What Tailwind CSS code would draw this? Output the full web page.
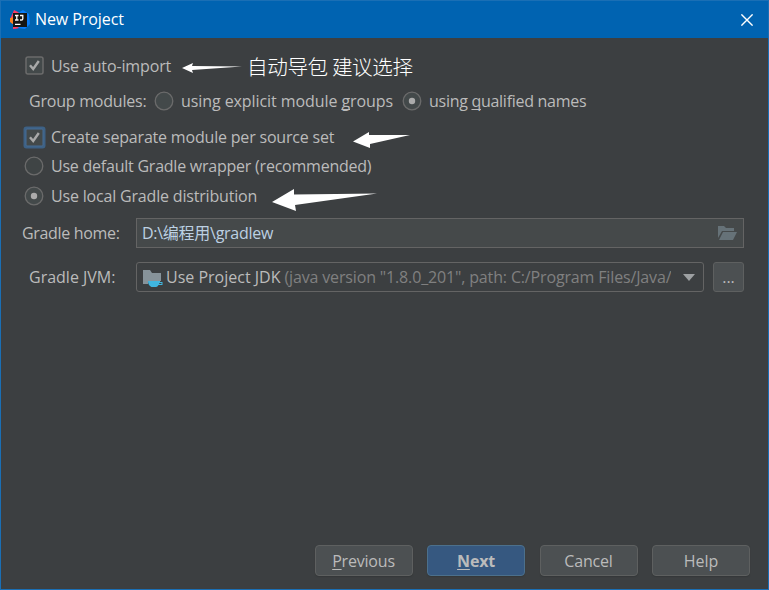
<!DOCTYPE html>
<html lang="en">
<head>
<meta charset="utf-8">
<title>New Project</title>
<script src="https://cdn.jsdelivr.net/npm/@tailwindcss/browser@4"></script>
</head>
<body class="w-[769px] h-[590px] overflow-hidden bg-[#3c3f41]">
<div class="relative flex flex-col w-[769px] h-[590px] border border-[#1a6fb5] bg-[#3c3f41] font-['Open_Sans','Noto_Sans_CJK_SC',sans-serif] text-[16px] leading-[24px] text-[#bbbbbb] whitespace-nowrap [text-decoration-skip-ink:none]">
  <header class="flex items-center h-[37px] shrink-0 bg-[#0063b1] pl-[9px] pr-[15px] text-white">
    <svg class="w-5 h-5 shrink-0" viewBox="0 0 20 20">
      <path d="M4 0 10 3 9 18 3 19 3 14 0 11 1 7Z" fill="#fb3965"/>
      <path d="M0 8 4 7V15L0 12Z" fill="#fc801d"/>
      <path d="M13 0 19 4 20 14 15 19 8 18V3Z" fill="#087cfa"/>
      <path d="M4 14 9 18 3 19Z" fill="#fb3965"/>
      <rect x="3" y="3" width="14" height="14" fill="#151515"/>
      <path d="M5 5.500H8.500M6.800 5.500V10M5 10H8.500M10 5.500H12.800V8.800Q12.800 10 11.500 10H10M5 14.300H10.500" fill="none" stroke="#fff" stroke-width="1.3"/>
    </svg>
    <span class="ml-[5px] -mt-px tracking-[-0.08px]">New Project</span>
    <svg class="ml-auto w-3 h-3" viewBox="0 0 12 12"><path d="M.4.4 11.6 11.6M11.6.4.4 11.6" stroke="#fff" stroke-width="1.4"/></svg>
  </header>

  <main class="flex flex-col flex-1 pt-4">
    <div class="flex items-center h-6 pl-6">
      <svg class="-mt-[2px] w-[19px] h-[19px]" viewBox="0 0 19 19"><rect x="1" y="1" width="17" height="17" rx="2" fill="#43494a" stroke="#6b6b6b" stroke-width="1.5"/><path d="M5 9.200 8.200 13 13.800 5" fill="none" stroke="#a9a9a9" stroke-width="2.4"/></svg>
      <span class="ml-[7px] w-[120px] tracking-[-0.13px]">Use auto-import</span>
      <svg class="ml-[11px] mt-[3px] w-[61px] h-[12px]" viewBox="0 0 61 12"><path d="M0 6 11 1 10 4 60 4.500 10 8 11 11Z" fill="#fff"/></svg>
      <span class="ml-[4px] text-[20.600px] tracking-[-0.4px] font-light text-white font-['Noto_Sans_CJK_SC',sans-serif]">自动导包 建议选择</span>
    </div>
    <div class="flex items-center h-6 mt-[11px] pl-7">
      <span class="w-[118px] tracking-[-0.22px]">Group modules:</span>
      <svg class="ml-[7px] w-5 h-5" viewBox="0 0 20 20"><circle cx="10" cy="10" r="8.800" fill="#43494a" stroke="#6b6b6b" stroke-width="1.3"/></svg>
      <span class="ml-[7px] w-[213px] tracking-[-0.08px]">using explicit module <u class="underline-offset-2">g</u>roups</span>
      <svg class="ml-[8px] w-5 h-5" viewBox="0 0 20 20"><circle cx="10" cy="10" r="8.800" fill="#43494a" stroke="#6b6b6b" stroke-width="1.3"/><circle cx="10" cy="10" r="3.200" fill="#ababab"/></svg>
      <span class="ml-[7px] tracking-[-0.28px]">using <u class="underline-offset-2">q</u>ualified names</span>
    </div>
    <div class="flex items-center h-6 mt-3 pl-[22px]">
      <svg class="w-[23px] h-[23px]" viewBox="0 0 23 23"><rect x="0.500" y="0.500" width="22" height="22" rx="3" fill="#3d6185"/><rect x="3" y="3" width="17" height="17" rx="1" fill="#43494a" stroke="#466d94"/><path d="M7 11.200 10.200 15 15.800 7" fill="none" stroke="#a9a9a9" stroke-width="2.4"/></svg>
      <span class="ml-[5px] w-[283px] tracking-[-0.19px]">Create separate module per source set</span>
      <svg class="ml-[19px] mt-[5px] w-[58px] h-[16px]" viewBox="0 0 58 16"><path d="M0 9.500 16 0 16 3 57 3 17 12 17 16Z" fill="#fff"/></svg>
    </div>
    <div class="flex items-center h-6 mt-[5px] pl-[23px]">
      <svg class="w-5 h-5" viewBox="0 0 20 20"><circle cx="10" cy="10" r="8.800" fill="#3f4445" stroke="#6b6b6b" stroke-width="1.3"/></svg>
      <span class="ml-[7px] tracking-[-0.23px]">Use default Gradle wrapper (recommended)</span>
    </div>
    <div class="flex items-center h-6 mt-[6px] pl-[23px]">
      <svg class="w-5 h-5" viewBox="0 0 20 20"><circle cx="10" cy="10" r="8.800" fill="#43494a" stroke="#6b6b6b" stroke-width="1.3"/><circle cx="10" cy="10" r="3.200" fill="#ababab"/></svg>
      <span class="ml-[7px] w-[206px] tracking-[-0.18px]">Use local Gradle distribution</span>
      <svg class="ml-[15px] mt-[7px] w-[106px] h-[22px]" viewBox="0 0 106 22"><path d="M0 13 22 0 22 5.500 105 4.500 23 16 24 22Z" fill="#fff"/></svg>
    </div>
    <div class="flex items-center h-[30px] mt-[10px] pl-[21px]">
      <span class="w-[114px] tracking-[-0.32px]">Gradle home:</span>
      <div class="flex items-center w-[608px] h-[30px] border border-[#646464] bg-[#45494a] pl-[5px] pr-[6px] text-[#bcd0e2]">
        <span class="tracking-[-0.27px]">D:\编程用\gradlew</span>
        <svg class="ml-auto w-[19px] h-[15px]" viewBox="0 0 19 15" fill="#667278"><path d="M0 0H6L8 2H16V5H4L0 12Z"/><path d="M5 6H19L15 14H1Z"/></svg>
      </div>
    </div>
    <div class="flex items-center h-[30px] mt-[14px] pl-7">
      <span class="w-[107px]">Gradle JVM:</span>
      <div class="flex items-center w-[568px] h-[30px] rounded-[3px] border border-[#646464] pl-[6px] pr-[8px]">
        <svg class="w-5 h-[19px] mt-[2px] shrink-0" viewBox="0 0 20 19"><path d="M0 1H7L9 4H18V12H5V15H0Z" fill="#87939a"/><path d="M5 12H17V13H19.500V16H15.500Q14.500 18 13 18H8.500Q5 16.500 5 12Z" fill="#40b6e0"/><path d="M16.500 14H18.500V15H16Z" fill="#3c3f41"/></svg>
        <span class="ml-[3px]">Use Project JDK</span>
        <span class="ml-[4px] w-[387px] overflow-hidden text-[#808080] tracking-[-0.15px]">(java version "1.8.0_201", path: C:/Program Files/Java/</span>
        <svg class="ml-auto w-3 h-[7px] shrink-0" viewBox="0 0 12 7"><path d="M0 0H12L6 7Z" fill="#9da0a2"/></svg>
      </div>
      <div class="ml-[9px] flex items-center justify-center w-[31px] h-[30px] rounded-[3px] border border-[#5e6060] bg-[#4c5052]"><span>...</span></div>
    </div>
  </main>

  <footer class="flex justify-end gap-[14.500px] pr-[18px] pb-[13px] shrink-0">
    <div class="flex items-center justify-center w-[98px] h-[31px] rounded-[4px] border border-[#5e6060] bg-[#4c5052] shadow-[0_1px_1px_#35383a]"><span class="tracking-[-0.2px]"><u class="underline-offset-2">P</u>revious</span></div>
    <div class="flex items-center justify-center w-[98px] h-[31px] rounded-[4px] border border-[#4c708c] bg-[#365880] shadow-[0_1px_1px_#35383a] font-bold"><span class="tracking-[-0.2px]"><u class="underline-offset-2">N</u>ext</span></div>
    <div class="flex items-center justify-center w-[98px] h-[31px] rounded-[4px] border border-[#5e6060] bg-[#4c5052] shadow-[0_1px_1px_#35383a]"><span class="tracking-[-0.2px]">Cancel</span></div>
    <div class="flex items-center justify-center w-[98px] h-[31px] rounded-[4px] border border-[#5e6060] bg-[#4c5052] shadow-[0_1px_1px_#35383a]"><span>Help</span></div>
  </footer>
</div>
</body>
</html>
